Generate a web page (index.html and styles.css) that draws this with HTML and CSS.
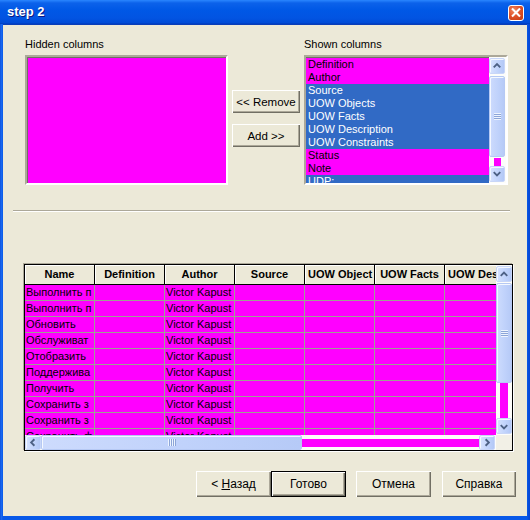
FILE: index.html
```html
<!DOCTYPE html>
<html>
<head>
<meta charset="utf-8">
<link rel="stylesheet" href="styles.css">
</head>
<body>
<div class="window">
  <div class="titlebar">
    <span class="title">step 2</span>
    <span class="close"><svg width="15" height="15" viewBox="0 0 15 15"><path d="M4 4 L11 11 M11 4 L4 11" stroke="#fff" stroke-width="2.2" stroke-linecap="square"/></svg></span>
  </div>
  <div class="client">
    <div class="top">
      <div class="col col-hidden">
        <div class="label">Hidden columns</div>
        <div class="listbox hidden-list"></div>
      </div>
      <div class="movebtns">
        <button class="btn btn-move">&lt;&lt; Remove</button>
        <button class="btn btn-move">Add &gt;&gt;</button>
      </div>
      <div class="col col-shown">
        <div class="label">Shown columns</div>
        <div class="listbox shown-list">
          <div class="items">
            <div class="item mag">Definition</div>
            <div class="item mag">Author</div>
            <div class="item sel">Source</div>
            <div class="item sel">UOW Objects</div>
            <div class="item sel">UOW Facts</div>
            <div class="item sel">UOW Description</div>
            <div class="item sel">UOW Constraints</div>
            <div class="item mag">Status</div>
            <div class="item mag">Note</div>
            <div class="item sel">UDP:</div>
          </div>
          <div class="vbar small">
            <div class="sbtn"><svg width="15" height="14" viewBox="0 0 15 14"><polyline points="4,8.5 7.5,5 11,8.5" fill="none" stroke="#4D6185" stroke-width="2"/></svg></div>
            <div class="thumb v"><span class="grip-v"></span></div>
            <div class="track v"><span class="magdot"></span></div>
            <div class="sbtn"><svg width="15" height="14" viewBox="0 0 15 14"><polyline points="4,5 7.5,8.5 11,5" fill="none" stroke="#4D6185" stroke-width="2"/></svg></div>
          </div>
        </div>
      </div>
    </div>
    <div class="separator"></div>
    <div class="grid">
      <div class="viewport">
        <div class="grow head">
          <div class="hc">Name</div><div class="hc">Definition</div><div class="hc">Author</div><div class="hc">Source</div><div class="hc">UOW Object</div><div class="hc">UOW Facts</div><div class="hc">UOW Description</div>
        </div>
        <div class="grow"><div class="dc">Выполнить п</div><div class="dc"></div><div class="dc">Victor Kapust</div><div class="dc"></div><div class="dc"></div><div class="dc"></div><div class="dc"></div></div>
        <div class="grow"><div class="dc">Выполнить п</div><div class="dc"></div><div class="dc">Victor Kapust</div><div class="dc"></div><div class="dc"></div><div class="dc"></div><div class="dc"></div></div>
        <div class="grow"><div class="dc">Обновить</div><div class="dc"></div><div class="dc">Victor Kapust</div><div class="dc"></div><div class="dc"></div><div class="dc"></div><div class="dc"></div></div>
        <div class="grow"><div class="dc">Обслуживат</div><div class="dc"></div><div class="dc">Victor Kapust</div><div class="dc"></div><div class="dc"></div><div class="dc"></div><div class="dc"></div></div>
        <div class="grow"><div class="dc">Отобразить</div><div class="dc"></div><div class="dc">Victor Kapust</div><div class="dc"></div><div class="dc"></div><div class="dc"></div><div class="dc"></div></div>
        <div class="grow"><div class="dc">Поддержива</div><div class="dc"></div><div class="dc">Victor Kapust</div><div class="dc"></div><div class="dc"></div><div class="dc"></div><div class="dc"></div></div>
        <div class="grow"><div class="dc">Получить</div><div class="dc"></div><div class="dc">Victor Kapust</div><div class="dc"></div><div class="dc"></div><div class="dc"></div><div class="dc"></div></div>
        <div class="grow"><div class="dc">Сохранить з</div><div class="dc"></div><div class="dc">Victor Kapust</div><div class="dc"></div><div class="dc"></div><div class="dc"></div><div class="dc"></div></div>
        <div class="grow"><div class="dc">Сохранить з</div><div class="dc"></div><div class="dc">Victor Kapust</div><div class="dc"></div><div class="dc"></div><div class="dc"></div><div class="dc"></div></div>
        <div class="grow"><div class="dc">Сохранить ф</div><div class="dc"></div><div class="dc">Victor Kapust</div><div class="dc"></div><div class="dc"></div><div class="dc"></div><div class="dc"></div></div>
      </div>
      <div class="vbar big">
        <div class="sbtn"><svg width="15" height="15" viewBox="0 0 15 15"><polyline points="4,9 7.5,5.5 11,9" fill="none" stroke="#4D6185" stroke-width="2"/></svg></div>
        <div class="thumb v tall"><span class="grip-v"></span></div>
        <div class="track v"><span class="magstripe-v"></span></div>
        <div class="sbtn"><svg width="15" height="15" viewBox="0 0 15 15"><polyline points="4,6 7.5,9.5 11,6" fill="none" stroke="#4D6185" stroke-width="2"/></svg></div>
      </div>
      <div class="hbar">
        <div class="sbtn h"><svg width="15" height="13" viewBox="0 0 15 13"><polyline points="9,3 5.5,6.5 9,10" fill="none" stroke="#4D6185" stroke-width="2"/></svg></div>
        <div class="thumb h"><span class="grip-h"></span></div>
        <div class="track h"><span class="magstripe-h"></span></div>
        <div class="sbtn h"><svg width="15" height="13" viewBox="0 0 15 13"><polyline points="6,3 9.5,6.5 6,10" fill="none" stroke="#4D6185" stroke-width="2"/></svg></div>
      </div>
      <div class="corner"></div>
    </div>
    <div class="footer">
      <button class="btn btn-foot">&lt; <u>Н</u>азад</button>
      <button class="btn btn-foot default">Готово</button>
      <button class="btn btn-foot gap10">Отмена</button>
      <button class="btn btn-foot gap11">Справка</button>
    </div>
  </div>
</div>
</body>
</html>
```
FILE: styles.css
```css
* { box-sizing: border-box; }
body {
  margin: 0;
  font-family: "Liberation Sans", Arial, sans-serif;
  font-size: 11px;
  background: #fff;
}
.window {
  width: 530px;
  height: 520px;
  display: flex;
  flex-direction: column;
  background: linear-gradient(to right, #0A46D2 0, #1C6CF2 1px, #0859E8 3px, #0859E8 527px, #0648D6 529px);
}
.titlebar {
  height: 24px;
  display: flex;
  align-items: center;
  justify-content: space-between;
  padding: 0 6px 0 7px;
  background: linear-gradient(#2A86FF 0, #0C62EA 3px, #0058E6 10px, #0254E2 18px, #004BD6 23px, #0038B8 24px);
  color: #fff;
}
.title {
  font: bold 13px "Liberation Sans", Arial, sans-serif;
  text-shadow: 1px 1px 0 #0A1883;
  margin-top: -1px;
}
.close {
  width: 16px;
  height: 16px;
  border: 1px solid #fff;
  border-radius: 3px;
  background: radial-gradient(circle at 35% 30%, #EE8A63 0, #E0532A 45%, #C4380E 100%);
  display: flex;
  align-items: center;
  justify-content: center;
  margin-top: 1px;
}
.close svg { display: block; }
.client {
  margin: 0 3px 4px;
  height: 492px;
  background: #ECE9D8;
  display: flex;
  flex-direction: column;
  box-shadow: inset 0 1px 0 #0A3DB8;
}
.top {
  display: flex;
  margin: 14px 0 0 22px;
}
.label {
  height: 13px;
  line-height: 13px;
  margin-bottom: 4px;
  color: #000;
}
.col-hidden { width: 203px; }
.col-shown { width: 204px; margin-left: 4px; }
.movebtns {
  width: 68px;
  margin-left: 4px;
  padding-top: 52px;
  display: flex;
  flex-direction: column;
  gap: 11px;
}
.listbox {
  height: 130px;
  border: 2px solid;
  border-color: #ACA899 #FFFFFF #FFFFFF #ACA899;
  box-shadow: inset 1px 1px 0 #716F64;
}
.hidden-list { background: #FF00FF; }
.shown-list {
  background: #fff;
  display: flex;
  overflow: hidden;
}
.items { flex: 1; padding-top: 1px; }
.item {
  height: 13px;
  line-height: 13px;
  padding-left: 2px;
  white-space: nowrap;
}
.item.mag { background: #FF00FF; color: #000; }
.item.sel { background: #316AC5; color: #fff; }

.btn {
  font-family: "Liberation Sans", Arial, sans-serif;
  font-size: 11px;
  color: #000;
  background: #ECE9D8;
  border: none;
  padding: 0;
  box-shadow: inset 1px 1px 0 #FFFFFF, inset -1px -1px 0 #716F64, inset -2px -2px 0 #ACA899;
}
.btn-move { height: 23px; width: 68px; font-size: 11.5px; }

/* scrollbars */
.vbar {
  width: 17px;
  background: #FDFDFA;
  display: flex;
  flex-direction: column;
  padding: 1px 1px 1px 0;
}
.vbar.big { width: 16px; padding: 1px 0 1px 0; }
.sbtn {
  height: 16px;
  flex: none;
  border: 1px solid #C8D6F8;
  border-radius: 2px;
  background: linear-gradient(to right, #D6E2FE, #C2D4FC 55%, #B3C8F6);
  box-shadow: inset 1px 1px 0 #F4F8FF;
  display: flex;
  align-items: center;
  justify-content: center;
}
.sbtn svg { display: block; }
.sbtn.h { width: 16px; height: auto; }
.thumb {
  flex: none;
  border: 1px solid #B6C9F4;
  border-radius: 2px;
  background: linear-gradient(to right, #CDDBFD, #C0D2FB 55%, #B6CAF7);
  box-shadow: inset 1px 1px 0 #F4F8FF;
  display: flex;
  align-items: center;
  justify-content: center;
}
.thumb.v { height: 81px; margin-top: 2px; }
.thumb.v.tall { height: 100px; margin-top: 1px; }
.thumb.h { width: 261px; margin-left: 0; }
.grip-v {
  width: 7px;
  height: 7px;
  background: repeating-linear-gradient(#EEF4FE 0 1px, #8CA5D8 1px 2px);
}
.grip-h {
  width: 8px;
  height: 7px;
  background: repeating-linear-gradient(to right, #EEF4FE 0 1px, #8CA5D8 1px 2px);
}
.track { flex: 1; display: flex; }
.track.v { justify-content: center; align-items: flex-start; }
.magdot {
  width: 7px;
  height: 8px;
  margin-top: 1px;
  background: #FF00FF;
}
.magstripe-v {
  width: 8px;
  height: 100%;
  margin-left: -1px;
  background: #FF00FF;
}
.track.h { align-items: center; }
.magstripe-h {
  width: 100%;
  height: 8px;
  background: #FF00FF;
}

.separator {
  margin: 25px 0 0 10px;
  width: 497px;
  height: 2px;
  border-top: 1px solid #ACA899;
  border-bottom: 1px solid #FFFFFF;
}

.grid {
  margin: 52px 0 0 21px;
  width: 489px;
  height: 187px;
  border: 1px solid #000;
  box-shadow: -1px -1px 0 #ACA899, 1px 1px 0 #FFFFFF;
  display: grid;
  grid-template-columns: 471px 16px;
  grid-template-rows: 170px 15px;
  background: #fff;
}
.viewport {
  overflow: hidden;
  background: #fff;
}
.grow {
  display: flex;
  width: 490px;
  height: 16px;
  background: #FF00FF;
  border-bottom: 1px solid #9DA292;
}
.grow.head {
  height: 20px;
  background: #ECE9D8;
  border-bottom: 1px solid #000;
}
.hc {
  width: 70px;
  flex: none;
  border-right: 1px solid #000;
  box-shadow: inset 1px 1px 0 #fff;
  font-weight: bold;
  text-align: center;
  line-height: 19px;
  padding: 0 3px;
  white-space: nowrap;
  overflow: hidden;
}
.dc {
  width: 70px;
  flex: none;
  border-right: 1px solid #9DA292;
  line-height: 15px;
  padding-left: 1px;
  white-space: nowrap;
  overflow: hidden;
  color: #000;
}
.hbar {
  display: flex;
  background: #FDFDFA;
  padding: 0 1px 0 0;
}
.corner { background: #F2F0E6; }

.footer {
  display: flex;
  margin: 20px 0 0 193px;
}
.btn-foot { width: 75px; height: 26px; font-size: 12px; }
.btn-foot.default { border: 1px solid #000; }
.gap10 { margin-left: 10px; }
.gap11 { margin-left: 11px; width: 74px; }
```
